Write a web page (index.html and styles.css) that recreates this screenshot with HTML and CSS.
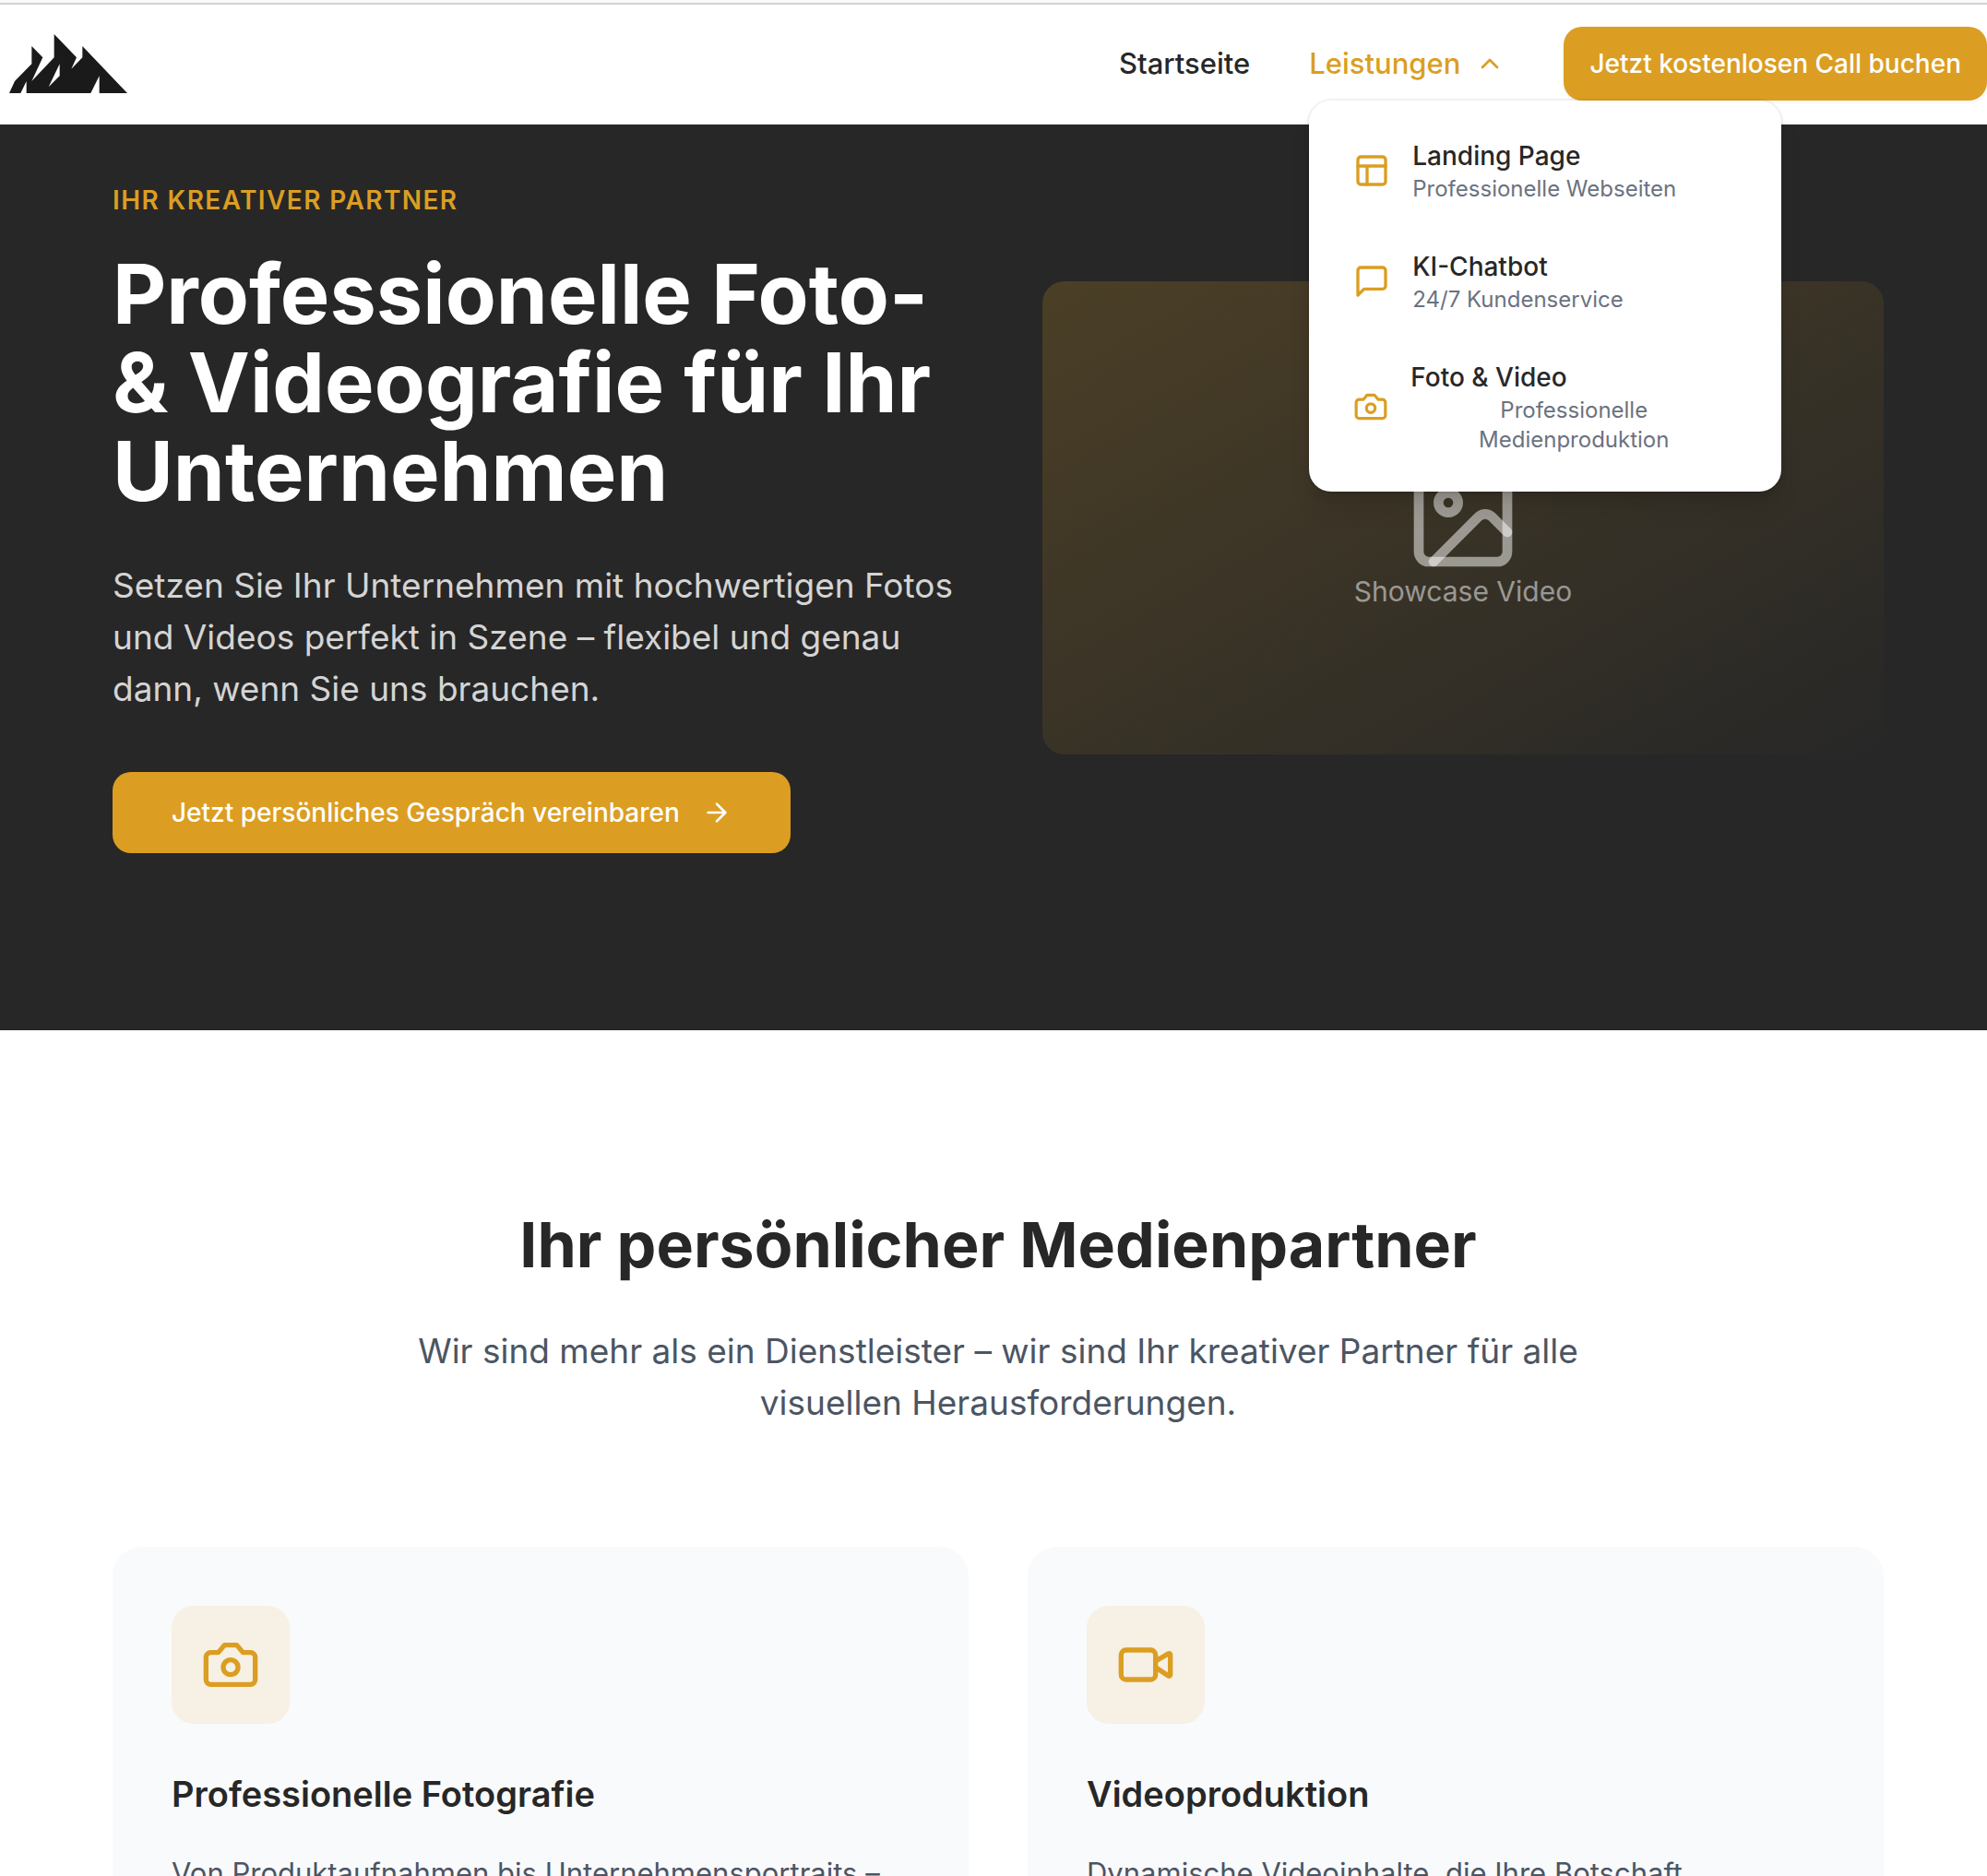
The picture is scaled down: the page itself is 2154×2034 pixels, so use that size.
FILE: index.html
```html
<!DOCTYPE html>
<html lang="de">
<head>
<meta charset="utf-8">
<meta name="viewport" content="width=device-width, initial-scale=1">
<title>Foto &amp; Video</title>
<link rel="stylesheet" href="styles.css">
</head>
<body>
<header class="site-header">
  <a class="logo" href="#" aria-label="Startseite">
    <svg class="logo-mark" viewBox="30 111 384 192" aria-hidden="true"><path fill-rule="evenodd" d="M30 303 48 264 103 208V150L139 187 103 264 176 187V111L249 187 232 224 268 187V150L414 303H323V247L295 303H86V264L67 303ZM194 208 158 283 194 247Z"/></svg>
  </a>
  <nav class="nav">
    <a class="nav-link" href="#">Startseite</a>
    <div class="nav-group">
      <button class="nav-link nav-toggle" type="button" aria-expanded="true">Leistungen
        <svg class="icon icon-sm" viewBox="0 0 24 24" aria-hidden="true"><path d="m18 15-6-6-6 6"/></svg>
      </button>
      <div class="menu">
        <a class="menu-item" href="#">
          <svg class="icon icon-md" viewBox="0 0 24 24" aria-hidden="true"><rect x="3" y="3" width="18" height="18" rx="2"/><path d="M3 9h18M9 21V9"/></svg>
          <span class="menu-text"><span class="menu-title">Landing Page</span><span class="menu-sub">Professionelle Webseiten</span></span>
        </a>
        <a class="menu-item" href="#">
          <svg class="icon icon-md" viewBox="0 0 24 24" aria-hidden="true"><path d="M21 15a2 2 0 0 1-2 2H7l-4 4V5a2 2 0 0 1 2-2h14a2 2 0 0 1 2 2z"/></svg>
          <span class="menu-text"><span class="menu-title">KI-Chatbot</span><span class="menu-sub">24/7 Kundenservice</span></span>
        </a>
        <button class="menu-item" type="button">
          <svg class="icon icon-md" viewBox="0 0 24 24" aria-hidden="true"><path d="M14.5 4h-5L7 7H4a2 2 0 0 0-2 2v9a2 2 0 0 0 2 2h16a2 2 0 0 0 2-2V9a2 2 0 0 0-2-2h-3l-2.500-3z"/><circle cx="12" cy="13" r="3"/></svg>
          <span class="menu-text"><span class="menu-title">Foto &amp; Video</span><span class="menu-sub menu-sub-center">Professionelle Medienproduktion</span></span>
        </button>
      </div>
    </div>
    <button class="btn btn-nav" type="button">Jetzt kostenlosen Call buchen</button>
  </nav>
</header>
<main>
  <section class="hero">
    <div class="hero-copy">
      <p class="eyebrow">Ihr kreativer Partner</p>
      <h1 class="hero-title">Professionelle Foto- &amp; Videografie für Ihr Unternehmen</h1>
      <p class="hero-text">Setzen Sie Ihr Unternehmen mit hochwertigen Fotos und Videos perfekt in Szene – flexibel und genau dann, wenn Sie uns brauchen.</p>
      <button class="btn btn-hero" type="button">Jetzt persönliches Gespräch vereinbaren
        <svg class="icon icon-sm" viewBox="0 0 24 24" aria-hidden="true"><path d="M5 12h14M12 5l7 7-7 7"/></svg>
      </button>
    </div>
    <div class="showcase">
      <svg class="icon icon-xl" viewBox="0 0 24 24" aria-hidden="true"><rect x="3" y="3" width="18" height="18" rx="2"/><circle cx="9" cy="9" r="2"/><path d="m21 15-3.086-3.086a2 2 0 0 0-2.828 0L6 21"/></svg>
      <span class="showcase-label">Showcase Video</span>
    </div>
  </section>
  <section class="partner">
    <h2 class="partner-title">Ihr persönlicher Medienpartner</h2>
    <p class="partner-text">Wir sind mehr als ein Dienstleister – wir sind Ihr kreativer Partner für alle visuellen Herausforderungen.</p>
    <div class="cards">
      <article class="card">
        <div class="card-icon"><svg class="icon icon-lg" viewBox="0 0 24 24" aria-hidden="true"><path d="M14.500 4h-5L7 7H4a2 2 0 0 0-2 2v9a2 2 0 0 0 2 2h16a2 2 0 0 0 2-2V9a2 2 0 0 0-2-2h-3l-2.500-3z"/><circle cx="12" cy="13" r="3"/></svg></div>
        <h3 class="card-title">Professionelle Fotografie</h3>
        <p class="card-text">Von Produktaufnahmen bis Unternehmensportraits –</p>
      </article>
      <article class="card">
        <div class="card-icon"><svg class="icon icon-lg" viewBox="0 0 24 24" aria-hidden="true"><path d="m16 13 5.223 3.482a.5.5 0 0 0 .777-.416V7.870a.5.5 0 0 0-.752-.432L16 10.500"/><rect x="2" y="6" width="14" height="12" rx="2"/></svg></div>
        <h3 class="card-title">Videoproduktion</h3>
        <p class="card-text">Dynamische Videoinhalte, die Ihre Botschaft</p>
      </article>
    </div>
  </section>
</main>
</body>
</html>
```
FILE: styles.css
```css
:root {
  --gold: #db9e22;
  --ink: #272727;
  --slate: #4b5563;
  --muted: #6b7280;
  --gutter-left: 122px;
  --gutter-right: 112px;
}

* { box-sizing: border-box; }

body {
  margin: 0;
  background: #fff;
  color: var(--ink);
  font-family: Inter, "Liberation Sans", sans-serif;
  border-top: 3px solid #fafafa;
}

h1, h2, h3, p { margin: 0; }
a { color: inherit; text-decoration: none; }
button { font: inherit; color: inherit; background: none; border: 0; padding: 0; cursor: pointer; }

.icon {
  display: block;
  fill: none;
  stroke: currentColor;
  stroke-width: 2;
  stroke-linecap: round;
  stroke-linejoin: round;
}
.icon-sm { width: 32px; height: 32px; }
.icon-md { width: 40px; height: 40px; color: var(--gold); }
.icon-lg { width: 64px; height: 64px; }
.icon-xl { width: 128px; height: 128px; }

/* Header */
.site-header {
  display: flex;
  align-items: center;
  justify-content: space-between;
  height: 132px;
  padding-left: 10px;
  border-top: 2px solid #d2d2d2;
  border-bottom: 2px solid #f3f4f6;
}
.logo-mark { display: block; width: 128px; height: 64px; fill: #1a1a1a; }
.nav { display: flex; align-items: center; gap: 64px; }
.nav-link { font-size: 31px; line-height: 48px; font-weight: 500; }
.nav-toggle { display: flex; align-items: center; gap: 16px; color: var(--gold); }
.nav-group { position: relative; display: flex; align-items: center; height: 80px; }

.menu {
  position: absolute;
  top: 100%;
  left: 0;
  z-index: 10;
  width: 512px;
  padding: 16px;
  border-radius: 24px;
  background: #fff;
  box-shadow: 0 0 0 2px rgba(0, 0, 0, .05), 0 20px 30px -6px rgba(0, 0, 0, .1), 0 8px 12px -4px rgba(0, 0, 0, .1);
}
.menu-item { display: flex; align-items: center; gap: 24px; width: 100%; padding: 24px 32px; }
.menu-text { display: flex; flex-direction: column; }
.menu-title { font-size: 28px; line-height: 40px; font-weight: 500; text-align: left; }
.menu-sub { font-size: 24px; line-height: 32px; color: var(--muted); }
.menu-sub-center { text-align: center; }

.btn {
  display: inline-flex;
  align-items: center;
  border-radius: 20px;
  background: var(--gold);
  color: #fff;
  font-size: 28px;
  line-height: 40px;
  font-weight: 500;
  white-space: nowrap;
}
.btn-nav { padding: 20px 28px; box-shadow: 0 2px 4px rgba(0, 0, 0, .05); }
.btn-hero { gap: 24px; margin-top: 62px; padding: 24px 64px; }

/* Hero */
.hero {
  display: grid;
  grid-template-columns: 1fr 1fr;
  align-items: center;
  gap: 96px;
  padding: 62px var(--gutter-right) 192px var(--gutter-left);
  background: var(--ink);
}
.eyebrow {
  color: var(--gold);
  font-size: 28px;
  line-height: 40px;
  font-weight: 600;
  letter-spacing: 0.05em;
  text-transform: uppercase;
}
.hero-title { margin-top: 34px; color: #fff; font-size: 90px; line-height: 96px; font-weight: 700; }
.hero-text { margin: 48px -16px 0 0; color: #d4d4d4; font-size: 37px; line-height: 56px; }
.showcase {
  display: flex;
  flex-direction: column;
  align-items: center;
  justify-content: center;
  aspect-ratio: 16 / 9;
  padding-top: 32px;
  border-radius: 24px;
  background: linear-gradient(to bottom right, rgba(219, 158, 34, .2), rgba(219, 158, 34, 0));
  color: rgba(255, 255, 255, .5);
}
.showcase-label { font-size: 30px; line-height: 32px; }

/* Partner */
.partner { padding: 192px var(--gutter-right) 192px var(--gutter-left); }
.partner-title { font-size: 68px; line-height: 80px; font-weight: 700; text-align: center; }
.partner-text {
  max-width: 1344px;
  margin: 48px auto 0;
  color: var(--slate);
  font-size: 37px;
  line-height: 56px;
  text-align: center;
}
.cards { display: grid; grid-template-columns: 1fr 1fr; gap: 64px; margin-top: 128px; }
.card { padding: 64px; border-radius: 32px; background: #f9fafb; }
.card-icon {
  display: grid;
  place-items: center;
  width: 128px;
  height: 128px;
  border-radius: 24px;
  background: #f7f0e4;
  color: var(--gold);
}
.card-title { margin-top: 48px; font-size: 38px; line-height: 56px; font-weight: 600; }
.card-text { margin-top: 32px; color: var(--slate); font-size: 31px; line-height: 52px; }
```
